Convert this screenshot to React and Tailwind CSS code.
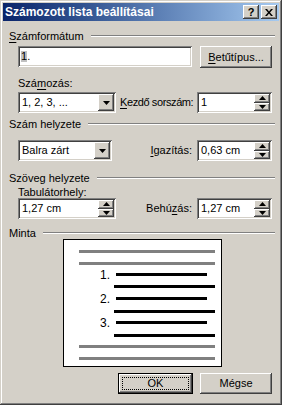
import React from 'react';

const sunken = 'bg-white shadow-[inset_1px_1px_#808080,inset_-1px_-1px_#ffffff,inset_2px_2px_#404040,inset_-2px_-2px_#d4d0c8]';
const raised = 'bg-[#d4d0c8] shadow-[inset_-1px_-1px_#404040,inset_1px_1px_#ffffff,inset_-2px_-2px_#808080,inset_2px_2px_#d4d0c8]';

const U = ({ children }) => <span className="underline underline-offset-[2px]">{children}</span>;

const GroupHeader = ({ children, className = '' }) => (
    <div className={`flex items-center h-[10px] pl-[6px] pr-[4px] ${className}`}>
        <span className="whitespace-nowrap leading-none">{children}</span>
        <div className="flex-1 ml-[7px] flex flex-col">
            <div className="h-px bg-[#808080]" />
            <div className="h-px bg-white" />
        </div>
    </div>
);

const Arrow = ({ dir = 'down' }) => (
    <svg width="7" height="4" viewBox="0 0 7 4" className="block">
        {dir === 'down'
            ? <polygon points="0,0 7,0 3.5,4" fill="#000" />
            : <polygon points="0,4 7,4 3.5,0" fill="#000" />}
    </svg>
);

const SpinBox = ({ value, className = '' }) => (
    <div className={`${sunken} h-[21px] flex items-center pl-[4px] pr-[2px] ${className}`}>
        <span className="flex-1 leading-none whitespace-nowrap">{value}</span>
        <div className="flex flex-col w-[16px] h-[17px]">
            <div className={`${raised} flex-1 flex items-center justify-center`}><Arrow dir="up" /></div>
            <div className={`${raised} flex-1 flex items-center justify-center`}><Arrow dir="down" /></div>
        </div>
    </div>
);

const Combo = ({ value, className = '' }) => (
    <div className={`${sunken} h-[21px] flex items-center pl-[4px] pr-[2px] ${className}`}>
        <span className="flex-1 leading-none whitespace-nowrap">{value}</span>
        <div className={`${raised} w-[16px] h-[17px] flex items-center justify-center`}><Arrow dir="down" /></div>
    </div>
);

const Button = ({ children, className = '', isDefault = false }) => (
    <div className={`h-[21px] ${isDefault ? 'border border-black' : ''} ${className}`}>
        <div className={`${raised} h-full flex items-center justify-center relative`}>
            {isDefault && <div className="absolute inset-[3px] border border-dotted border-black" />}
            <span className="leading-none whitespace-nowrap">{children}</span>
        </div>
    </div>
);

const Line = ({ color, className }) => <div className={`h-[3px] ${color} ${className}`} />;

const NumberedItem = ({ n, top, gap }) => (
    <>
        <div className={`flex items-center h-[3px] ${top}`}>
            <span className="w-[31px] shrink-0 text-right text-[12px] leading-none font-['Liberation_Sans',sans-serif]">{n}</span>
            <div className="ml-[6px] w-[91px] h-[3px] bg-black" />
        </div>
        <Line color="bg-black" className={`w-[101px] ml-[35px] ${gap}`} />
    </>
);

const App = () => {
    return (
        <div className="w-[282px] h-[405px] bg-[#d4d0c8] p-[3px] text-[11px] text-black font-['Tahoma','Liberation_Sans',sans-serif] shadow-[inset_-1px_-1px_#404040,inset_1px_1px_#d4d0c8,inset_-2px_-2px_#808080,inset_2px_2px_#ffffff] overflow-hidden select-none">
            {/* title bar */}
            <div className="h-[18px] flex items-center pl-[2px] pr-[2px] bg-gradient-to-r from-[#0a246a] to-[#a6caf0]">
                <span className="flex-1 text-white font-bold text-[12px] leading-none whitespace-nowrap">Számozott lista beállításai</span>
                <div className={`${raised} w-[16px] h-[14px] flex items-center justify-center font-bold text-[11px] leading-none`}>?</div>
                <div className={`${raised} w-[16px] h-[14px] ml-[2px] flex items-center justify-center`}>
                    <svg width="8" height="7" viewBox="0 0 8 7"><path d="M0 0h2l2 2.5L6 0h2L5 3.5 8 7H6L4 4.5 2 7H0l3-3.5z" fill="#000" /></svg>
                </div>
            </div>

            <GroupHeader className="mt-[10px]"><U>S</U>zámformátum</GroupHeader>

            <div className="flex mt-[5px] pl-[15px] pr-[7px] gap-[8px]">
                <div className={`${sunken} h-[21px] w-[174px] flex items-center pl-[3px]`}>
                    <span className="bg-[#c0c0c0] leading-none">1</span><span className="leading-none">.</span>
                </div>
                <Button className="flex-1 !h-[22px]"><U>B</U>etűtípus...</Button>
            </div>

            <div className="mt-[10px] pl-[15px] h-[11px] leading-none">Szá<U>m</U>ozás:</div>
            <div className="flex items-center mt-[3px] pl-[15px] pr-[7px]">
                <Combo value="1, 2, 3, ..." className="w-[98px] shrink-0" />
                <span className="ml-[4px] flex-1 leading-none whitespace-nowrap tracking-[-0.4px]"><U>K</U>ezdő sorszám:</span>
                <SpinBox value="1" className="w-[75px] shrink-0" />
            </div>

            <GroupHeader className="mt-[6px]">Szám helyzete</GroupHeader>

            <div className="flex items-center mt-[11px] pl-[15px] pr-[7px]">
                <Combo value="Balra zárt" className="w-[94px] shrink-0" />
                <span className="flex-1 text-right pr-[5px] leading-none whitespace-nowrap"><U>I</U>gazítás:</span>
                <SpinBox value="0,63 cm" className="w-[75px] shrink-0" />
            </div>

            <GroupHeader className="mt-[12px]">Szöveg helyzete</GroupHeader>

            <div className="mt-[4px] pl-[15px] h-[11px] leading-none"><U>T</U>abulátorhely:</div>
            <div className="flex items-center pl-[15px] pr-[7px]">
                <SpinBox value="1,27 cm" className="w-[98px] shrink-0" />
                <span className="flex-1 text-right pr-[5px] leading-none whitespace-nowrap">Behú<U>z</U>ás:</span>
                <SpinBox value="1,27 cm" className="w-[75px] shrink-0" />
            </div>

            <GroupHeader className="mt-[9px]">Minta</GroupHeader>

            {/* preview */}
            <div className="mt-px ml-[60px] w-[159px] h-[128px] bg-white border border-black pt-[10px] pl-[15px]">
                <Line color="bg-[#808080]" className="w-[136px]" />
                <Line color="bg-[#808080]" className="w-[136px] mt-[9px]" />
                <NumberedItem n="1." top="mt-[8px]" gap="mt-[9px]" />
                <NumberedItem n="2." top="mt-[9px]" gap="mt-[10px]" />
                <NumberedItem n="3." top="mt-[8px]" gap="mt-[10px]" />
                <Line color="bg-[#808080]" className="w-[136px] mt-[8px]" />
                <Line color="bg-[#808080]" className="w-[136px] mt-[9px]" />
            </div>

            <div className="flex mt-[6px] pl-[115px] pr-[7px] gap-[7px]">
                <Button isDefault className="w-[75px]">OK</Button>
                <Button className="flex-1">Mégse</Button>
            </div>
        </div>
    );
};

export default App;
